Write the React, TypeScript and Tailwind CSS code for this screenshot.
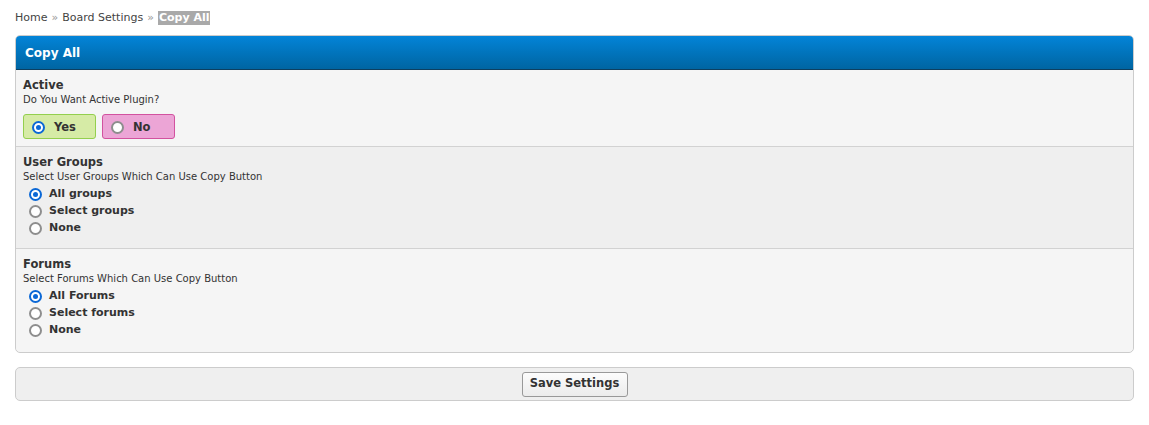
import React from "react";

const font = { fontFamily: '"DejaVu Sans", Verdana, sans-serif' };

function Radio({ checked }: { checked?: boolean }) {
	return checked ? (
		<span className="flex h-[13px] w-[13px] shrink-0 items-center justify-center rounded-full border-2 border-[#0b68d6] bg-white">
			<span className="h-[5px] w-[5px] rounded-full bg-[#0b68d6]"></span>
		</span>
	) : (
		<span className="h-[13px] w-[13px] shrink-0 rounded-full border-2 border-[#8e8e8e] bg-white"></span>
	);
}

function OptionList({ options }: { options: string[] }) {
	return (
		<div className="mt-[3px] flex flex-col pl-[6px]">
			{options.map((opt, i) => (
				<label key={opt} className="flex h-[17px] items-center gap-[7px]">
					<Radio checked={i === 0} />
					<span className="text-[11px] font-bold text-[#333]">{opt}</span>
				</label>
			))}
		</div>
	);
}

function Row({
	title,
	desc,
	alt,
	last,
	pb,
	children,
}: {
	title: string;
	desc: string;
	alt?: boolean;
	last?: boolean;
	pb: string;
	children: React.ReactNode;
}) {
	return (
		<div
			className={`px-[7px] pt-[7px] ${pb} ${alt ? "bg-[#efefef]" : "bg-[#f5f5f5]"} ${
				last ? "rounded-b-[5px]" : "border-b border-[#d2d2d2]"
			}`}>
			<div className="text-[11.5px] font-bold leading-[16px] text-[#333]">{title}</div>
			<div className="text-[10px] leading-[13px] text-[#333]">{desc}</div>
			{children}
		</div>
	);
}

export default function App() {
	return (
		<div className="bg-white px-[15px] pt-[11px] text-[#333]" style={font}>
			{/* breadcrumb */}
			<div className="flex items-center gap-[4px] text-[11px] leading-[14px] text-[#444]">
				<span>Home</span>
				<span className="text-[#999]">»</span>
				<span>Board Settings</span>
				<span className="text-[#999]">»</span>
				<span className="bg-[#a9a9a9] px-[1px] font-bold text-white">Copy All</span>
			</div>

			{/* main panel */}
			<div className="mt-[10px] rounded-[5px] border border-[#ccc] bg-[#f5f5f5]">
				<div className="flex h-[34px] items-center rounded-t-[4px] border-b border-[#0d3f60] bg-gradient-to-b from-[#0384d8] to-[#0065a2] px-[9px]">
					<span className="text-[12px] font-bold text-white">Copy All</span>
				</div>

				<Row title="Active" desc="Do You Want Active Plugin?" pb="pb-[7px]">
					<div className="mt-[8px] flex gap-[6px]">
						<label className="flex h-[25px] w-[73px] items-center gap-[9px] rounded-[3px] border border-[#94cf4e] bg-[#d6eba6] pl-[8px] pt-[1px]">
							<Radio checked />
							<span className="pt-[1px] text-[11.5px] font-bold">Yes</span>
						</label>
						<label className="flex h-[25px] w-[73px] items-center gap-[9px] rounded-[3px] border border-[#d2529f] bg-[#eca5d6] pl-[8px] pt-[1px]">
							<Radio />
							<span className="pt-[1px] text-[11.5px] font-bold">No</span>
						</label>
					</div>
				</Row>

				<Row title="User Groups" desc="Select User Groups Which Can Use Copy Button" alt pb="pb-[11px]">
					<OptionList options={["All groups", "Select groups", "None"]} />
				</Row>

				<Row title="Forums" desc="Select Forums Which Can Use Copy Button" last pb="pb-[13px]">
					<OptionList options={["All Forums", "Select forums", "None"]} />
				</Row>
			</div>

			{/* save bar */}
			<div className="mt-[14px] flex h-[34px] items-center justify-center rounded-[5px] border border-[#ccc] bg-[#efefef]">
				<button className="h-[25px] w-[106px] rounded-[3px] border border-[#999] bg-gradient-to-b from-[#fcfcfc] to-[#ececec] text-[11.5px] font-bold text-[#333]">
					Save Settings
				</button>
			</div>
		</div>
	);
}
